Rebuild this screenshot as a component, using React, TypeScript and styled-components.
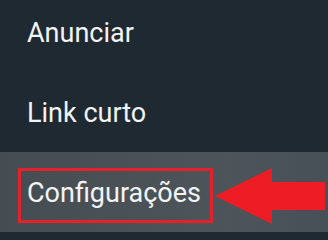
import React from "react";
import styled, { createGlobalStyle } from "styled-components";

const Global = createGlobalStyle`
  html, body { margin: 0; padding: 0; background: #1f2931; }
  body { width: 328px; height: 234px; overflow: hidden; }
`;

const Menu = styled.ul`
  list-style: none;
  margin: -8px 0 0;
  padding: 0;
  width: 328px;
  background: #1f2931;
  font-family: Roboto, "Noto Sans", sans-serif;
`;

const Item = styled.li<{ $active?: boolean }>`
  position: relative;
  box-sizing: border-box;
  height: 80px;
  display: flex;
  align-items: center;
  padding: 2px 0 0 27px;
  font-size: 27px;
  color: #f2f4f5;
  background: ${(p) => (p.$active ? "linear-gradient(90deg, #454d53 0%, #4d555b 70%, #465056 100%)" : "transparent")};
`;

const Highlight = styled.span`
  position: absolute;
  left: 18px;
  top: 16px;
  width: 195px;
  height: 55px;
  box-sizing: border-box;
  border: 3px solid #e3222b;
`;

const Arrow = styled.svg`
  position: absolute;
  left: 214px;
  top: 15px;
`;

export default function App() {
  return (
    <>
      <Global />
      <Menu>
        <Item>Anunciar</Item>
        <Item>Link curto</Item>
        <Item $active>
          Configurações
          <Highlight />
          <Arrow width="112" height="60" viewBox="0 0 112 60">
            <polygon
              points="1,29 58,1 58,15 111,15 111,43 58,43 58,57"
              fill="#ee1c25"
            />
          </Arrow>
        </Item>
      </Menu>
    </>
  );
}
